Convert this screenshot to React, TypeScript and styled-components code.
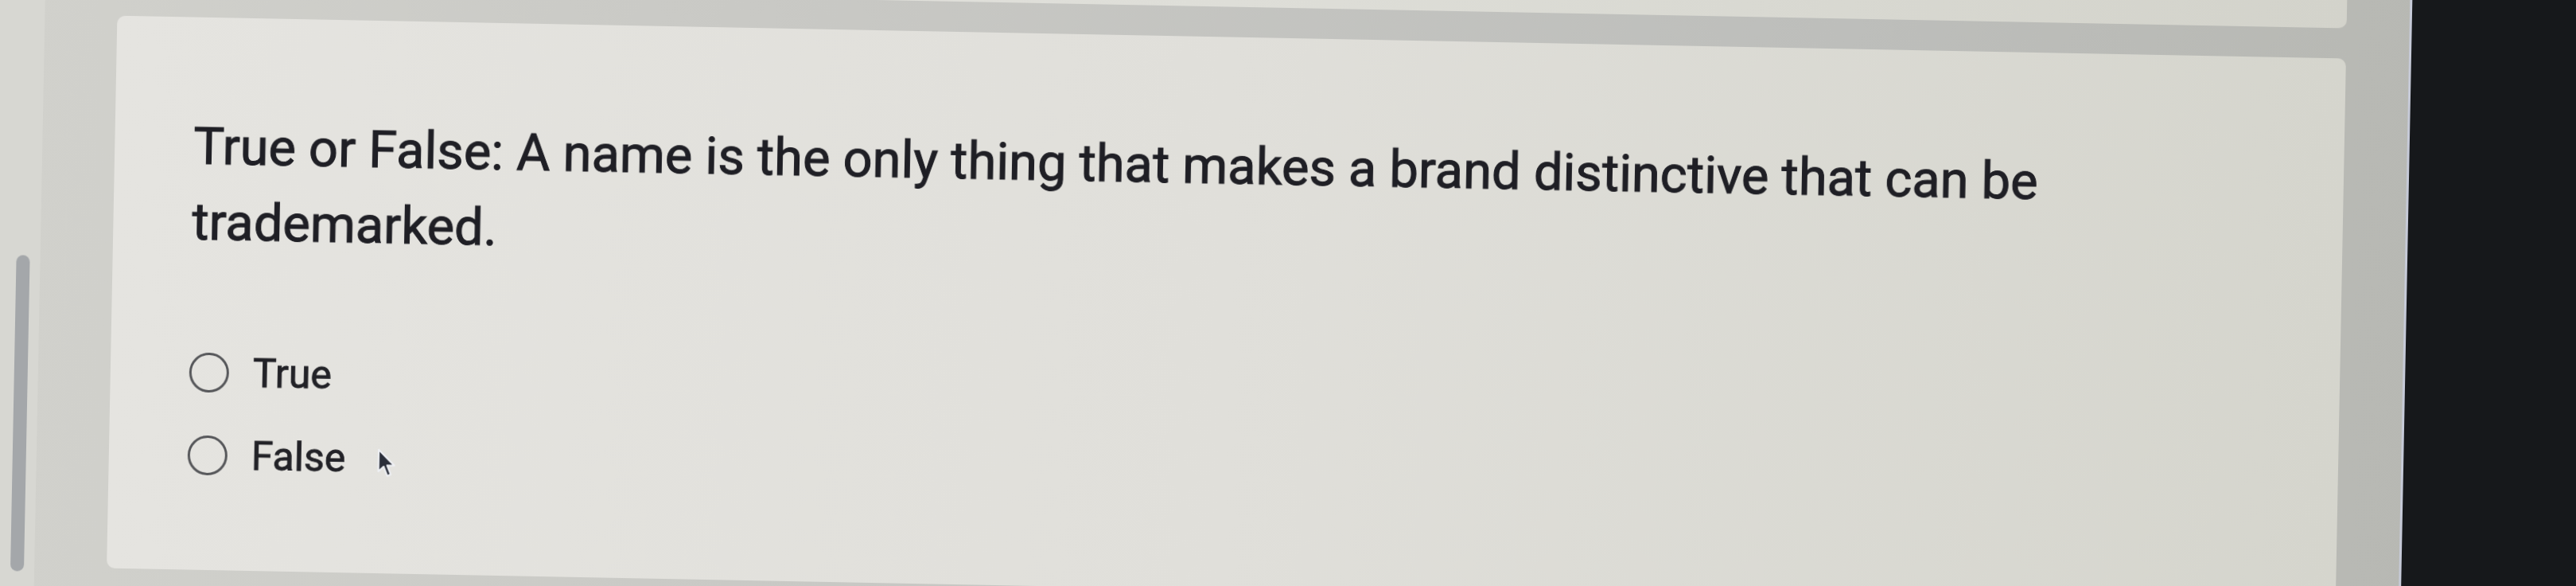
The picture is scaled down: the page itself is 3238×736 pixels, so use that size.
import React from 'react'
import styled, { createGlobalStyle } from 'styled-components'

const GlobalStyle = createGlobalStyle`
    html, body {
        margin: 0;
        padding: 0;
    }
    body {
        width: 3238px;
        height: 736px;
        overflow: hidden;
        background: #c9c9c4;
        font-family: Roboto, 'Liberation Sans', Arial, sans-serif;
    }
`

// the photo is taken slightly tilted, so the whole screen is rotated a bit
const Viewport = styled.div`
    width: 3238px;
    height: 736px;
    overflow: hidden;
`

const Scene = styled.div`
    display: flex;
    width: 3438px;
    height: 936px;
    margin: -100px 0 0 -100px;
    transform: rotate(1.1deg);
    transform-origin: 50% 50%;
    filter: blur(0.5px);
    background: linear-gradient(90deg, #d2d2cd 0%, #c9c9c5 30%, #bdbebb 70%, #b5b6b0 100%);
`

const LeftRail = styled.div`
    flex-shrink: 0;
    width: 150px;
    box-sizing: border-box;
    padding: 451px 0 0 120px;
    background: #d7d7d2;
`

const RailThumb = styled.div`
    width: 17px;
    height: 397px;
    border-radius: 9px;
    background: #a4a7aa;
`

const MainColumn = styled.div`
    flex-shrink: 0;
    display: flex;
    flex-direction: column;
    width: 2802px;
    margin-left: 91px;
`

const TopCard = styled.div`
    height: 110px;
    border-radius: 0 0 10px 10px;
    background: linear-gradient(90deg, #e3e2de 0%, #deded8 50%, #d3d3cb 100%);
`

const Card = styled.div`
    height: 694px;
    margin-top: 38px;
    box-sizing: border-box;
    padding: 115px 300px 0 99px;
    border-radius: 10px;
    background: linear-gradient(90deg, #e5e4e0 0%, #e0dfda 50%, #d5d5cd 100%);
`

const Question = styled.h2`
    margin: 0;
    font-size: 65px;
    line-height: 95px;
    font-weight: 400;
    color: #1f1f25;
    -webkit-text-stroke: 1px #1f1f25;
`

const OptionList = styled.div`
    display: flex;
    flex-direction: column;
    margin-top: 89px;
`

const OptionRow = styled.label`
    display: flex;
    align-items: center;
    height: 104px;
`

const Radio = styled.span`
    flex-shrink: 0;
    width: 50px;
    height: 50px;
    box-sizing: border-box;
    border: 3.5px solid #56575a;
    border-radius: 50%;
`

const OptionLabel = styled.span`
    margin-left: 30px;
    font-size: 50px;
    color: #222227;
    -webkit-text-stroke: 0.8px #222227;
`

const Pointer = styled.svg`
    flex-shrink: 0;
    margin: 12px 0 0 40px;
`

const Bezel = styled.div`
    flex: 1;
    margin-left: 79px;
    border-left: 3px solid #c6cad8;
    background: #16181b;
`

const options = ['True', 'False']

export default function App() {
    return (
        <>
            <GlobalStyle />
            <Viewport>
                <Scene>
                    <LeftRail>
                        <RailThumb />
                    </LeftRail>
                    <MainColumn>
                        <TopCard />
                        <Card>
                            <Question>
                                True or False: A name is the only thing that makes a brand distinctive that can be
                                trademarked.
                            </Question>
                            <OptionList>
                                {options.map((option) => (
                                    <OptionRow key={option}>
                                        <Radio />
                                        <OptionLabel>{option}</OptionLabel>
                                        {option === 'False' && (
                                            <Pointer width="26" height="38" viewBox="0 0 14 21">
                                                <path
                                                    d="M1 1 L1 16 L4.6 12.6 L7.2 19 L9.6 18 L7 11.8 L12 11.8 Z"
                                                    fill="#2b2f3a"
                                                    stroke="#eef0f4"
                                                    strokeWidth="1.2"
                                                    strokeLinejoin="round"
                                                />
                                            </Pointer>
                                        )}
                                    </OptionRow>
                                ))}
                            </OptionList>
                        </Card>
                    </MainColumn>
                    <Bezel />
                </Scene>
            </Viewport>
        </>
    )
}
